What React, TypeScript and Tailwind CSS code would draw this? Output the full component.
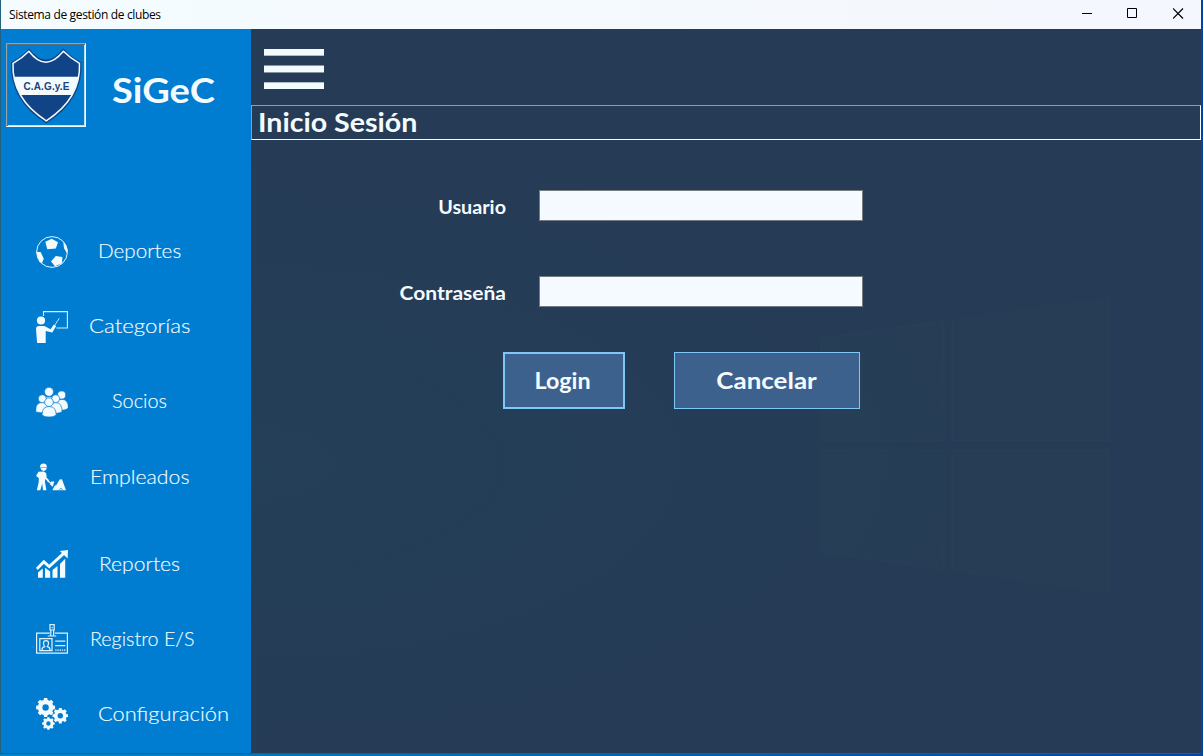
import React from "react";

const gear = (cx: number, cy: number, r: number, inner: number, hole: number, teeth = 8) => {
  const pts: string[] = [];
  const step = (Math.PI * 2) / teeth;
  for (let i = 0; i < teeth; i++) {
    const a = i * step;
    const corners: [number, number][] = [
      [-0.32, inner],
      [-0.22, r],
      [0.22, r],
      [0.32, inner],
    ];
    corners.forEach(([t, rad]) => {
      pts.push(`${(cx + Math.cos(a + t * step) * rad).toFixed(2)} ${(cy + Math.sin(a + t * step) * rad).toFixed(2)}`);
    });
  }
  return `M${pts.join("L")}ZM${cx - hole} ${cy}a${hole} ${hole} 0 1 0 ${hole * 2} 0a${hole} ${hole} 0 1 0 ${-hole * 2} 0Z`;
};

const Icon = ({ children }: { children: React.ReactNode }) => (
  <svg viewBox="0 0 32 32" className="h-8 w-8 shrink-0 fill-[#f4fbff]">
    {children}
  </svg>
);

const Ball = () => (
  <Icon>
    <circle cx="16" cy="16" r="15.4" fill="none" stroke="#e6f5fd" strokeWidth="1" />
    <path d="M9.3 5.8 15.7 2.7 22 6.2 19.8 12.4 11.3 13.2ZM27.3 6 29.2 7.6 31.6 13.5 30.8 17 28 12.2ZM.4 16 4.6 15.9 7.8 22.7 6 27 3.2 25.8ZM15 25.5 19.8 20 26.4 21 26 27.3 19 30.2Z" />
  </Icon>
);

const Teacher = () => (
  <Icon>
    <path d="M7.5 5V.6H31.4V17H20.5" fill="none" stroke="#d5edfb" strokeWidth="1.1" />
    <path d="M18.6 14.5 23.3 7.2" stroke="#d5edfb" strokeWidth=".9" />
    <circle cx="5" cy="9.5" r="4.1" />
    <path d="M0 18Q0 15 3 15H8.4L14.6 18.2 17.8 13.6 20.2 15.1 16.3 21.5 9.7 20V32H1.1Z" />
  </Icon>
);

const People = () => (
  <Icon>
    <g stroke="#007dd1" strokeWidth=".7" transform="translate(0 1)">
      <path d="M7 18Q7 9.6 13 9.6T19 18Z" />
      <circle cx="13" cy="4.8" r="4.5" />
      <path d="M18 22Q18 12.3 25.5 12.3 32.4 12.3 32.4 21 29 24.2 22 23Z" />
      <circle cx="25.6" cy="8" r="4.1" />
      <path d="M-.3 23Q-.3 15.6 6.3 15.6T12.5 24Q6 27-.3 25Z" />
      <path d="M13 24Q13 15.6 19.7 15.6T26 25Q22 27 15 26Z" />
      <circle cx="6.3" cy="11.7" r="4" />
      <circle cx="19.7" cy="11.7" r="4" />
      <path d="M6.1 27.5Q6.1 19.5 13.1 19.5T20.1 27.5Q19 30 13.1 30T6.1 27.5Z" />
      <circle cx="13" cy="15.2" r="4.3" />
    </g>
  </Icon>
);

const Worker = () => (
  <Icon>
    <g transform="translate(0 2.3)">
      <path d="M4 3.4Q4.3.2 7.5.2T10.8 3.4L11.4 4.1H3.8ZM4.7 4.8H10.6Q10.5 7.5 7.7 7.6 4.8 7.5 4.7 4.8Z" />
      <path d="M2.4 8.5 8 8.2 10.2 10 10.7 14.5 13.2 17 12.2 18.3 9.2 15.8 9 19 10.4 26.9H7L6.2 20.2 4.3 26.9H.9L2.7 18.7 2.8 14.7.1 12.7Z" />
      <path d="M11.3 17.2 14.9 20" stroke="#f4fbff" strokeWidth="1.3" />
      <path d="M14 21.2 15.2 18.1 18.4 18.2 16.7 23.4Z" />
      <path d="M16.4 26.9 18.6 22.5 20.4 21.8 23.6 16.2 26 16 27.6 20.5 30 26.9Z" />
      <path d="M23.2 26.2Q24.8 24.2 26.6 26.2" fill="none" stroke="#007dd1" strokeWidth=".8" />
    </g>
  </Icon>
);

const Chart = () => (
  <Icon>
    <g transform="translate(0 1.9)">
      <path d="M2 22.5 6.8 18.5V27.8H2ZM9 17.8 14.2 21.5V27.8H9ZM16.5 20.2 21.5 16V27.8H16.5ZM24 14 29.2 8.8V27.8H24Z" />
      <path d="M.8 19 7.8 11.9 13.2 16.7 27.5 3.8" fill="none" stroke="#f4fbff" strokeWidth="2.9" />
      <path d="M23.8 1 32 .2 31.6 8.6Z" />
    </g>
  </Icon>
);

const Badge = () => (
  <Icon>
    <g fill="none" stroke="#dff2fc" strokeWidth="1.2" transform="translate(0 1)">
      <path d="M13.8 9.1H.6V29.2H31.4V9.1H18.8" />
      <path d="M14 .6H18.2V6H14ZM14.8 6V11.4M17.6 6V11.4M11.8 12H20.3M16.2 3V4.2" />
      <path d="M3.8 14.6H16V26.7H3.8ZM5.8 26.5Q6 23 8.7 22.6 7.5 21 7.5 19 7.5 16.7 10 16.7T12.5 19Q12.5 21 11.3 22.6 13.9 23 14.2 26.5" />
      <path d="M19.2 17.1H29.3M19.2 21.6H29.3" />
      <path d="M19.2 26.2H29.5" strokeDasharray="1.4 .8" />
    </g>
  </Icon>
);

const Gears = () => (
  <Icon>
    <path
      fillRule="evenodd"
      d={gear(9.6, 9.5, 9.6, 7.8, 3.2) + gear(24.3, 17.7, 7.9, 6.3, 2.7) + gear(12.4, 25.5, 6.4, 5.1, 2.2)}
    />
  </Icon>
);

const items = [
  { label: "Deportes", icon: <Ball />, row: "h-[75px]", text: "ml-[30px] pb-[2px] scale-x-[1.06]" },
  { label: "Categorías", icon: <Teacher />, row: "h-[75px]", text: "ml-[21px] pb-[2px] scale-x-[1.14]" },
  { label: "Socios", icon: <People />, row: "h-[75px]", text: "ml-[44px] pb-[2px] scale-x-[1.02]" },
  { label: "Empleados", icon: <Worker />, row: "h-[75px] mb-[12px]", text: "ml-[22px] scale-x-[1.09]" },
  { label: "Reportes", icon: <Chart />, row: "h-[75px]", text: "ml-[31px] scale-x-[1.08]" },
  { label: "Registro E/S", icon: <Badge />, row: "h-[75px]", text: "ml-[22px] scale-x-[1.01]" },
  { label: "Configuración", icon: <Gears />, row: "h-[75px]", text: "ml-[30px] scale-x-[1.12]" },
];

const Shield = () => (
  <svg viewBox="0 0 78 82" className="h-full w-full">
    <path
      d="M22 4.2Q38.5 27 56.3 4.2 63 12.5 74.5 18.2 76.5 56 39.3 79.4 2 56 4 18.2 15.5 12.5 22 4.2Z"
      fill="#104487"
    />
    <path
      d="M21.9 7.3Q38.5 29 56.4 7.3 63.5 14.5 72.5 19.3 74 54.5 39.3 76.8 4.5 54.5 6 19.3 15 14.5 21.9 7.3Z"
      fill="#104487"
      stroke="#f4fbff"
      strokeWidth="1.5"
    />
    <path d="M7 32.7H71.5Q69.7 43 64.5 51H14Q8.8 43 7 32.7Z" fill="#f4fbff" />
    <text
      x="39.4"
      y="45.6"
      textAnchor="middle"
      textLength="46"
      className="fill-[#19437c] font-['Liberation_Sans',sans-serif] text-[10px] font-bold"
    >
      C.A.G.y.E
    </text>
  </svg>
);

export default function App() {
  return (
    <div className="flex h-[756px] w-[1203px] flex-col overflow-hidden bg-gradient-to-r from-[#0085c4] to-[#0045a4] pr-[2px] pb-[2px] font-['Century_Gothic','Lato',sans-serif]">
      <div className="flex min-h-0 flex-1 flex-col border-b border-l border-[#245f7d]">
        <header className="flex h-[29px] shrink-0 items-center justify-between bg-gradient-to-r from-[#f4fcff] to-[#f4f7fd] pl-2 text-black">
          <h1 className="font-['Open_Sans',sans-serif] text-[12px] leading-[28px] tracking-[-0.35px]">
            Sistema de gestión de clubes
          </h1>
          <div className="flex gap-[35px] pr-[17px] pb-[2px]">
            <svg viewBox="0 0 11 11" className="h-[11px] w-[11px]" fill="none" stroke="#000">
              <path d="M1 5.5H11" />
            </svg>
            <svg viewBox="0 0 11 11" className="h-[11px] w-[11px]" fill="none" stroke="#000">
              <path d="M.5 .5H9.5V9.5H.5Z" />
            </svg>
            <svg viewBox="0 0 11 11" className="h-[11px] w-[11px]" fill="none" stroke="#000" strokeWidth="1.2">
              <path d="M0 .5 10 10.5M10 .5 0 10.5" />
            </svg>
          </div>
        </header>
        <div className="flex min-h-0 flex-1">
          <aside className="flex w-[250px] shrink-0 flex-col bg-[#007dd1] text-[#f4fbff]">
            <div className="flex h-[185px] items-start pt-[14px] pl-[5px]">
              <div className="h-[84px] w-[80px] border border-t-[#a0a0a0] border-r-[#f4fbff] border-b-[#f4fbff] border-l-[#a0a0a0] shadow-[inset_1px_1px_0_#5f6b75,inset_-1px_-1px_0_#c5dcec]">
                <Shield />
              </div>
              <span className="mt-[26px] ml-[26px] origin-left scale-x-[1.12] text-[34px] leading-[42px] font-bold">
                SiGeC
              </span>
            </div>
            <nav>
              {items.map((item) => (
                <a key={item.label} className={`flex items-center pl-[35px] ${item.row}`}>
                  {item.icon}
                  <span
                    className={`origin-left text-[19.5px] leading-6 font-light whitespace-nowrap [-webkit-text-stroke:0.15px_#f4fbff] ${item.text}`}
                  >
                    {item.label}
                  </span>
                </a>
              ))}
            </nav>
          </aside>
          <main className="relative isolate flex-1 bg-[#263b56] bg-[radial-gradient(ellipse_at_0%_60%,#243f58_0%,#263b56_55%)] text-[#f4fbff]">
            <svg viewBox="0 0 950 724" className="absolute inset-0 -z-10 h-full w-full">
              <g fill="#2c4957" fillOpacity=".15" stroke="#2f5058" strokeOpacity=".25">
                <path d="M570 309 693 292V412H570Z" />
                <path d="M701 291 858 269V412H701Z" />
                <path d="M570 421H693V540L570 524Z" />
                <path d="M701 421H858V564L701 541Z" />
              </g>
            </svg>
            <button className="mt-5 ml-[13px] flex h-10 w-[60px] flex-col justify-between">
              <span className="h-[7px] w-full border-b border-[#aebbc6] bg-[#f4fbff]" />
              <span className="h-[8px] w-full border-y border-[#8495a2] bg-[#f4fbff]" />
              <span className="h-[7px] w-full border-t border-[#aebbc6] bg-[#f4fbff]" />
            </button>
            <h2 className="mt-4 flex h-[35px] border border-t-[#919ca6] border-r-[#f4fbff] border-b-[#f4fbff] border-l-[#919ca6] pl-[6px] text-[26px] leading-[33px] font-bold">
              <span className="origin-left scale-x-[1.1]">Inicio Sesión</span>
            </h2>
            <form className="mt-[50px]">
              <label className="flex h-[31px] items-center">
                <span className="w-[255px] origin-right scale-x-[1.04] pt-[3px] text-right text-[19px] font-bold">Usuario</span>
                <input className="ml-[33px] h-[31px] w-[324px] border border-[#747c82] bg-[#f4faff] px-2 text-black outline-none" />
              </label>
              <label className="mt-[55px] flex h-[31px] items-center">
                <span className="w-[255px] origin-right scale-x-[1.105] pt-[3px] text-right text-[19px] font-bold">Contraseña</span>
                <input
                  type="password"
                  className="ml-[33px] h-[31px] w-[324px] border border-[#747c82] bg-[#f4faff] px-2 text-black outline-none"
                />
              </label>
              <div className="mt-[45px] ml-[252px] flex gap-[49px] text-[22px] font-bold">
                <button type="button" className="h-[57px] w-[122px] border-2 border-[#7dc8f8] bg-[#3d618d] pr-[2px] pb-[1px]">
                  <span className="inline-block scale-x-[1.06]">Login</span>
                </button>
                <button type="button" className="h-[57px] w-[186px] border border-[#7dc8f8] bg-[#3d618d] pb-[1px]">
                  <span className="inline-block scale-x-[1.18]">Cancelar</span>
                </button>
              </div>
            </form>
          </main>
        </div>
      </div>
    </div>
  );
}
